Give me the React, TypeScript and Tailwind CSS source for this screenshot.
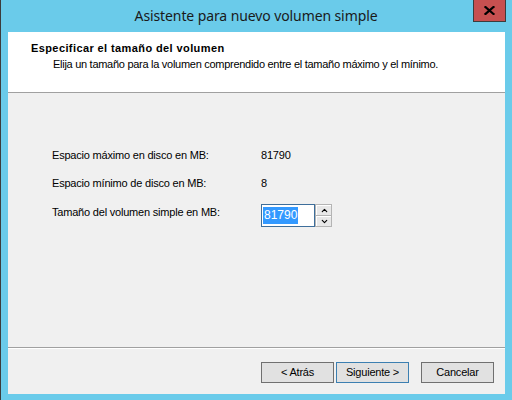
import { ChevronDown, ChevronUp } from "lucide-react";

const sans = { fontFamily: '"Liberation Sans", Arial, sans-serif' };

function WizardButton({ label, primary }: { label: string; primary?: boolean }) {
  return (
    <button
      className={`w-[73px] h-[21px] bg-[#e1e1e1] text-[11px] tracking-[-0.2px] leading-none text-black border ${
        primary ? "border-[#3c7fb1]" : "border-[#707070]"
      }`}
    >
      {label}
    </button>
  );
}

export default function App() {
  return (
    <div
      className="w-[512px] h-[400px] bg-[#6acbea] border-l border-[#3c3c3c] flex flex-col pl-[7px] pr-[7px] pb-[6px] overflow-hidden"
      style={sans}
    >
      {/* Title bar */}
      <div className="h-[32px] shrink-0 grid grid-cols-[1fr_auto_1fr] -ml-[8px] -mr-[7px]">
        <div />
        <div
          className="self-center text-[14px] tracking-[-0.1px] text-[#1a1a1a] leading-none pb-[1px]"
          style={{ fontFamily: '"Noto Sans", "Open Sans", sans-serif' }}
        >
          Asistente para nuevo volumen simple
        </div>
        <div className="flex justify-end pr-[6px]">
          <button className="w-[33px] h-[22px] bg-[#c75050] border border-t-0 border-[#3c3c3c] flex items-center justify-center">
            <svg width="11" height="9" viewBox="0 0 11 9">
              <path d="M1.5 1 L9.5 8 M9.5 1 L1.5 8" stroke="#000" strokeWidth="2.2" strokeLinecap="square" />
            </svg>
          </button>
        </div>
      </div>

      {/* Content */}
      <div className="flex-1 flex flex-col bg-[#f0f0f0]">
        {/* Header */}
        <div className="h-[61px] shrink-0 bg-white border-b border-[#a0a0a0] pt-[9px]">
          <div className="pl-[23px] text-[11px] tracking-[0.4px] font-bold leading-[14px] text-black">
            Especificar el tamaño del volumen
          </div>
          <div className="pl-[45px] mt-[2px] text-[11px] tracking-[-0.28px] leading-[14px] text-black">
            Elija un tamaño para la volumen comprendido entre el tamaño máximo y el mínimo.
          </div>
        </div>

        {/* Body */}
        <div className="flex-1 pt-[55px] pl-[44px]">
          <div className="grid grid-cols-[209px_auto] gap-y-[14px] text-[11px] tracking-[-0.2px] leading-[14px] text-black">
            <div>Espacio máximo en disco en MB:</div>
            <div>81790</div>
            <div>Espacio mínimo de disco en MB:</div>
            <div>8</div>
            <div className="mt-[1px]">Tamaño del volumen simple en MB:</div>
            <div className="flex">
              <div className="w-[54px] h-[23px] bg-white border border-[#3d6e9b] flex items-center pl-[1px]">
                <span className="bg-[#3399ff] text-white text-[12px] tracking-normal leading-[17px] px-[1px]">81790</span>
              </div>
              <div className="w-[17px] h-[23px] bg-[#b4b4b4] p-[1px] flex flex-col gap-[1px]">
                <div className="flex-1 bg-[#e8e8e8] border-t border-l border-white flex items-center justify-center">
                  <ChevronUp size={9} strokeWidth={3} color="#000" />
                </div>
                <div className="flex-1 bg-[#e8e8e8] border-t border-l border-white flex items-center justify-center">
                  <ChevronDown size={9} strokeWidth={3} color="#000" />
                </div>
              </div>
            </div>
          </div>
        </div>

        {/* Footer */}
        <div className="h-[47px] border-t border-[#a0a0a0] shrink-0">
          <div className="border-t border-white h-full flex items-start pt-[13px] pl-[253px] gap-[2px]">
            <WizardButton label="< Atrás" />
            <WizardButton label="Siguiente >" primary />
            <div className="w-[8px]" />
            <WizardButton label="Cancelar" />
          </div>
        </div>
      </div>
    </div>
  );
}
